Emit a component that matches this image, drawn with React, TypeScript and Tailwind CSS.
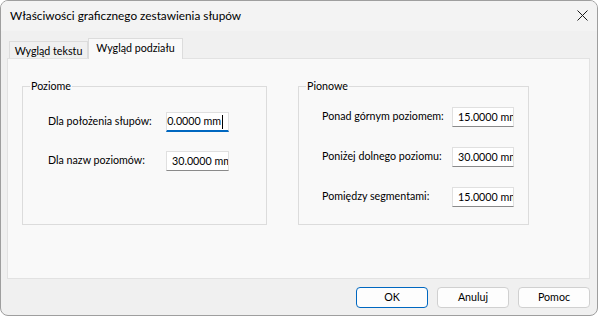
import React from "react";

function Field({ value, focused }: { value: string; focused?: boolean }) {
  return (
    <div
      className={
        "h-[20px] bg-white border border-[#e0e0e0] overflow-hidden flex items-center text-[10.7px] text-black whitespace-nowrap " +
        (focused
          ? "border-b-2 border-b-[#0067c0] justify-end pr-[5px]"
          : "border-b-[#8a8a8a] pl-[5px]")
      }
    >
      <span className="shrink-0">{value}</span>
      {focused && <span className="w-px h-[14px] bg-black ml-[1px] shrink-0" />}
    </div>
  );
}

function Row({
  label,
  value,
  labelW,
  inputW,
  focused,
}: {
  label: string;
  value: string;
  labelW: string;
  inputW: string;
  focused?: boolean;
}) {
  return (
    <div className="flex items-start">
      <div className={labelW + " text-[10.7px] leading-[15px] pt-[1px] text-black whitespace-nowrap"}>{label}</div>
      <div className={inputW}>
        <Field value={value} focused={focused} />
      </div>
    </div>
  );
}

export default function App() {
  return (
    <div className="w-[598px] h-[317px] bg-white font-['Lato',sans-serif]">
      <div className="w-[598px] h-[316px] border border-[#9e9e9e] rounded-[8px] overflow-hidden bg-[#f0f0f0] flex flex-col">
        {/* title bar */}
        <div className="h-[30px] bg-[#f3f3f3] flex items-center justify-between pl-[9px] pr-[9px] shrink-0">
          <span className="text-[11.8px] text-black">Właściwości graficznego zestawienia słupów</span>
          <svg width="11" height="11" viewBox="0 0 11 11" className="mt-[-1px]">
            <path d="M0.5 0.5 L10.5 10.5 M10.5 0.5 L0.5 10.5" stroke="#1a1a1a" strokeWidth="1" />
          </svg>
        </div>

        {/* body */}
        <div className="flex-1 pl-[6px] pr-[7px] pt-[7px] flex flex-col">
          {/* tabs */}
          <div className="flex items-end h-[20px] pl-[2px]">
            <div className="h-[17px] w-[79px] border border-b-0 border-[#dcdcdc] bg-[#f0f0f0] text-[10.7px] text-black flex items-center justify-center pt-[2px]">
              Wygląd tekstu
            </div>
            <div className="relative z-10 h-[21px] -mb-px w-[95px] border border-b-0 border-[#dcdcdc] bg-[#f9f9f9] text-[10.7px] text-black flex items-center justify-center pb-[2px]">
              Wygląd podziału
            </div>
          </div>

          {/* panel */}
          <div className="h-[221px] border border-[#e2e2e2] bg-[#f9f9f9] pl-[14px] pt-[27px] flex gap-[31px]">
            {/* Poziome */}
            <div className="relative w-[245px] h-[139px] border border-[#dcdcdc] pl-[25px] pt-[25px] flex flex-col gap-[19px]">
              <span className="absolute left-[7px] top-[-9px] px-[1px] bg-[#f9f9f9] text-[10.7px] leading-[15px] text-black">
                Poziome
              </span>
              <Row label="Dla położenia słupów:" value="30.0000 mm" labelW="w-[118px]" inputW="w-[63px]" focused />
              <Row label="Dla nazw poziomów:" value="30.0000 mm" labelW="w-[118px]" inputW="w-[63px]" />
            </div>
            {/* Pionowe */}
            <div className="relative w-[231px] h-[139px] border border-[#dcdcdc] pl-[23px] pt-[20px] flex flex-col gap-[20px]">
              <span className="absolute left-[7px] top-[-9px] px-[1px] bg-[#f9f9f9] text-[10.7px] leading-[15px] text-black">
                Pionowe
              </span>
              <Row label="Ponad górnym poziomem:" value="15.0000 mm" labelW="w-[130px]" inputW="w-[62px]" />
              <Row label="Poniżej dolnego poziomu:" value="30.0000 mm" labelW="w-[130px]" inputW="w-[62px]" />
              <Row label="Pomiędzy segmentami:" value="15.0000 mm" labelW="w-[130px]" inputW="w-[62px]" />
            </div>
          </div>

          {/* buttons */}
          <div className="flex justify-end gap-[9px] mt-[8px]">
            <button className="w-[72px] h-[21px] rounded-[4px] border border-[#0067c0] bg-[#fdfdfd] text-[10.7px] text-black">
              OK
            </button>
            <button className="w-[72px] h-[21px] rounded-[4px] border border-[#d0d0d0] bg-[#fdfdfd] text-[10.7px] text-black">
              Anuluj
            </button>
            <button className="w-[72px] h-[21px] rounded-[4px] border border-[#d0d0d0] bg-[#fdfdfd] text-[10.7px] text-black">
              Pomoc
            </button>
          </div>
        </div>
      </div>
    </div>
  );
}
